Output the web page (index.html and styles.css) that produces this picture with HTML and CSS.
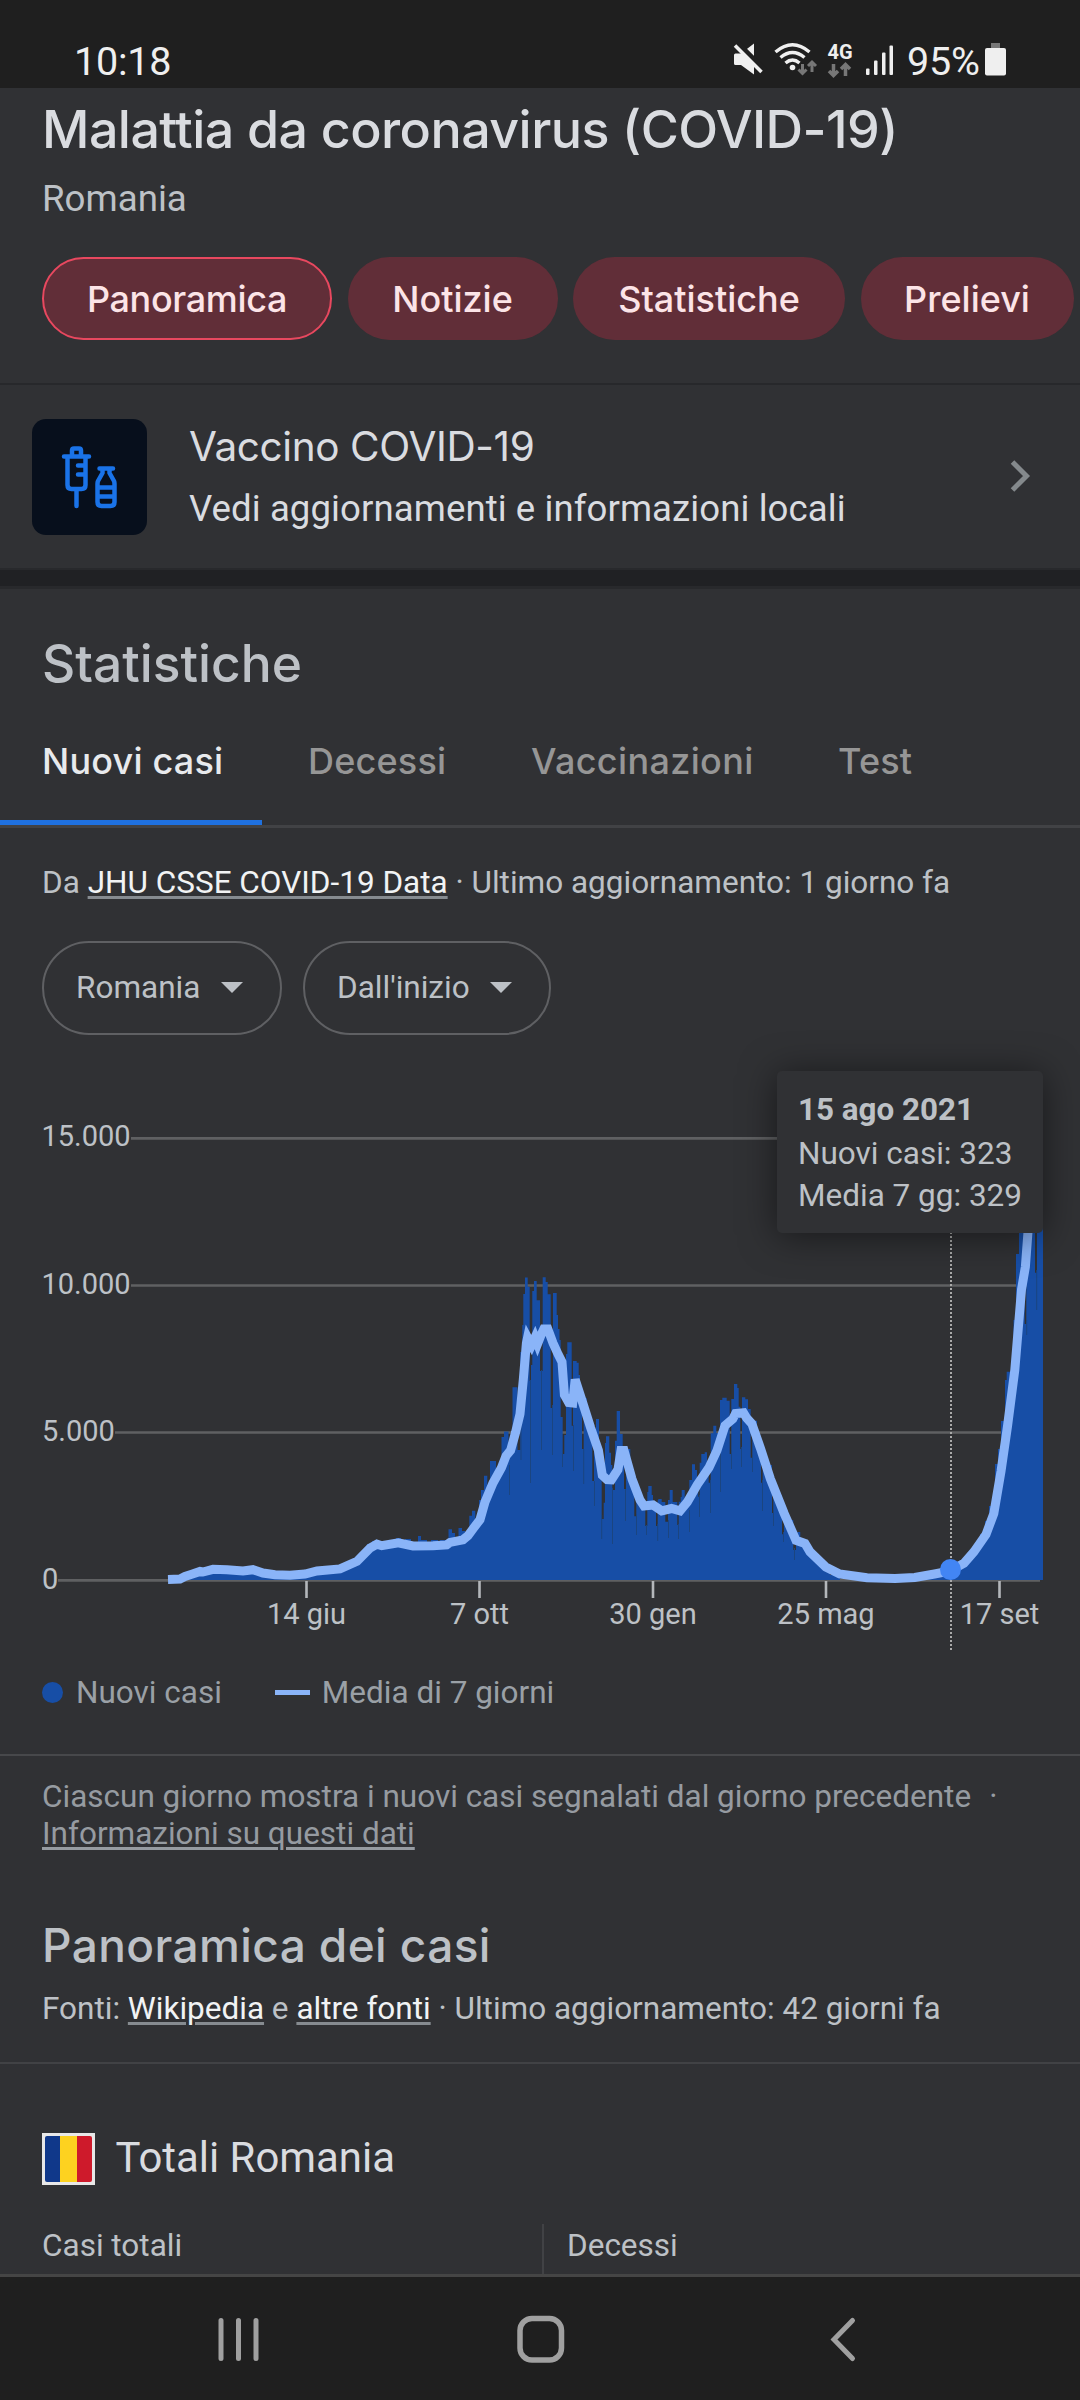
FILE: index.html
```html
<!DOCTYPE html>
<html lang="it">
<head>
<meta charset="utf-8">
<title>Malattia da coronavirus (COVID-19)</title>
<link rel="stylesheet" href="styles.css">
</head>
<body>
<div class="status-bar">
  <span class="clock">10:18</span>
  <svg class="status-icons" viewBox="725 30 175 58" width="175" height="58">
    <g fill="#efefef">
      <path d="M734 55q0-1.500 1.500-1.500h5.500l13-10v31l-13-9.500h-5.500q-1.500 0-1.500-1.500z"/>
      <path d="M737 43L765 71" stroke="#1f1f1f" stroke-width="6"/>
      <path d="M735 45.500L761.500 72" stroke="#efefef" stroke-width="3.600"/>
      <circle cx="792.500" cy="67.500" r="2.800"/>
      <rect x="866" y="68.500" width="3.500" height="6.500" rx="1"/>
      <rect x="874" y="60.500" width="3.500" height="14.500" rx="1"/>
      <rect x="882" y="52.500" width="3.500" height="22.500" rx="1"/>
      <rect x="889.500" y="45.500" width="3.500" height="29.500" rx="1"/>
    </g>
    <g fill="none" stroke="#efefef" stroke-width="3.400">
      <path d="M775.500 52Q792.500 37.500 809.500 52"/>
      <path d="M780.500 57.500Q792.500 47.500 804.500 57.500"/>
      <path d="M785.500 63Q792.500 57 799.500 63"/>
    </g>
    <g fill="none" stroke="#777" stroke-width="3">
      <path d="M802.500 64v9M798.500 69.500l4 4 4-4M812 72v-9M808 66l4-4 4 4"/>
      <path stroke-width="3.500" d="M833.500 64v11M829 71l4.500 4.500 4.500-4.500M845.500 76v-11M841 69l4.500-4.500 4.500 4.500"/>
    </g>
    <text class="net-label" x="827.500" y="58.500">4G</text>
  </svg>
  <span class="battery-text">95%</span>
  <svg class="battery" viewBox="0 0 21 33" width="21" height="33"><rect x="6" width="9" height="5" fill="#777"/><rect y="5" width="21" height="27.500" rx="2" fill="#efefef"/></svg>
</div>

<main class="page">
  <header class="hero">
    <h1 class="title">Malattia da coronavirus (COVID-19)</h1>
    <p class="place">Romania</p>
    <nav class="chips">
      <span class="chip chip-panoramica selected">Panoramica</span>
      <span class="chip chip-notizie">Notizie</span>
      <span class="chip chip-statistiche">Statistiche</span>
      <span class="chip chip-prelievi">Prelievi</span>
    </nav>
  </header>

  <section class="vaccine">
    <svg class="vaccine-icon" viewBox="0 0 115 116" width="115" height="116">
      <rect width="115" height="116" rx="14" fill="#070f1c"/>
      <g fill="none" stroke="#1a73e8" stroke-width="4.500" stroke-linecap="round" stroke-linejoin="round">
        <path d="M32 37.500h25M40 37v-5.500q0-2 2-2h5q2 0 2 2V37M35.500 38v28q0 4 4 4h10q4 0 4-4V38M44.500 71v16M53 46.500h-7M53 55.500h-7"/>
        <path d="M67.500 49.500h13.500M70.500 50v4l-4.500 8q-.500 1-.500 3v18q0 4 4 4h9q4 0 4-4V65q0-2-.500-3l-4.500-8v-4M66 68.500h16M66 77.500h16"/>
      </g>
    </svg>
    <div class="vaccine-text">
      <div class="vaccine-title">Vaccino COVID-19</div>
      <div class="vaccine-sub">Vedi aggiornamenti e informazioni locali</div>
    </div>
    <svg class="chevron" viewBox="0 0 24 34" width="24" height="34"><path d="M3.500 3l14 14-14 14" fill="none" stroke="#84898c" stroke-width="5"/></svg>
  </section>
  <div class="band"></div>

  <section class="stats">
    <h2 class="heading stats-heading">Statistiche</h2>
    <nav class="tabs">
      <span class="tab tab-nuovi active">Nuovi casi</span>
      <span class="tab tab-decessi">Decessi</span>
      <span class="tab tab-vaccinazioni">Vaccinazioni</span>
      <span class="tab tab-test">Test</span>
    </nav>
    <p class="source stats-source">Da <a>JHU CSSE COVID-19 Data</a> · Ultimo aggiornamento: 1 giorno fa</p>
    <div class="filters">
      <span class="filter filter-place"><span>Romania</span><i class="caret"></i></span>
      <span class="filter filter-period"><span>Dall'inizio</span><i class="caret"></i></span>
    </div>
    <div class="chart">
      <svg viewBox="0 1035 1080 625" width="1080" height="625">
        <path class="grid" d="M131 1138.300H1040M131 1285.500H1040M115 1432.500H1040M58 1580.300H1040"/>
        <path class="bars" d="M185 1580V1577H192V1573H198V1570H205V1568H212V1566H218V1568H226V1567H232V1570H250V1568H256V1571H262V1574H305V1573H315V1570H322V1568H340V1567H345V1562H355V1559H361V1553H367V1544H372V1541H380V1544H385V1543H390V1540H396V1538H401V1541H405V1539H411V1544H418V1536H421V1540H427V1543H431V1540H438V1542H440V1540H446V1545H448.500V1529.300H452V1533H455V1541H458.500V1528H462V1531H465V1540H469.300V1515.800H472V1510.800H475.300V1525H479V1500H481V1490H484V1475.800H487.300V1485H490V1461H496V1468H501.500V1437H504V1431.500H508.500V1455H512.500V1387.300H517.500V1450H520.300V1352H522.300V1325H523.300V1294H525V1277.500H527.700V1286.700H529.700V1381H531V1365H532.300V1291H534V1281H536.700V1300.300H540V1371H542.700V1277.300H545.700V1282H547.700V1294.300H550.700V1408H553V1293H556.700V1315H558V1329H559.500V1340H560.700V1417H562.700V1454H564.300V1435H566V1354H567.300V1342.300H571.700V1425.700H573V1361H576.700V1362.700H578.700V1375H580V1392H582V1449H583.700V1398H586.700V1412H589V1425H592.300V1481H594V1450H596V1419H599V1460H601.700V1519H603.700V1502.700H605V1443H606V1436.300H609.300V1452.700H611V1465H612.300V1490H615V1440.700H616.700V1411H620V1434H622.700V1460H624V1489H626V1460H627.300V1449H630.300V1475H634.300V1516.300H636.300V1495H641V1507H645.300V1526H647.300V1492H648.300V1486H651.700V1495H653V1503H656V1526H657.700V1500H658.300V1499H661.700V1502H665.300V1521.700H668V1500H669.700V1490H672.700V1502H677.300V1525H678.700V1501.700H680.700V1497H681.700V1490H684.700V1500H689.300V1480H692V1464.300H695V1470H697V1480H698.300V1496.700H699.700V1462.700H701.300V1454H704.700V1452.300H707V1467H708.700V1482.700H710.700V1433.300H713.300V1425.700H716.300V1433H720V1400H722.300V1397.700H726.700V1400.700H729.700V1454H731.300V1399H734V1384H737.300V1388H738.700V1406.700H740.300V1449H742V1397.300H745.300V1399.300H748V1409H750.700V1457.700H752.300V1425H754V1420.700H757V1440H761V1482.700H762.700V1465H772V1513H773.300V1495H782V1534.300H784V1520H793.300V1550H796V1540H797.300V1532H800.300V1543H806V1552H812V1560H820V1567H830V1575H840V1580H900V1578H935V1575H950V1571H960V1563H970V1555H977V1545H980V1534H985V1521H989V1506H995V1464H998V1449H1001V1421H1005V1380H1006.700V1371.700H1012V1354H1013.500V1320H1016V1254H1019V1220H1024.700V1324H1026.300V1220H1035V1272.700H1037V1220H1043V1580Z"/>
        <path class="gaps" d="M509.500 1465v30M521 1400v60M530.500 1380v103M541.500 1370v80M552.500 1405v50M562.500 1450v17M573.500 1425v46M583.700 1449v35M594.500 1481v25M601.700 1515v24M612.500 1488v56M625.500 1489v32M636.500 1514v21M646.500 1525v10M657.700 1524v17M668.500 1520v18M678.500 1524v15M689.500 1510v22M699.500 1495v22M710.500 1480v33M720.500 1450v42M731.500 1450v19M741.500 1447v20M752.500 1455v17M762.500 1480v31M773.500 1510v16M783.500 1532v10M794.500 1548v12M1026.700 1320v15M1036.700 1270v40"/>
        <path class="average" d="M168 1579.400L180 1579 185 1576.500 191.700 1574.300 200 1571.400 203 1572 213 1569.300 227 1569.700 243 1571 253 1569.700 263 1573 275 1574.700 290 1575.200 305 1574 317 1571 340 1568.900 357 1561.300 370 1548.200 377 1544.200 381.700 1545.700 398.300 1542.800 413 1546 433 1545.700 446.700 1544.900 450 1542.400 463 1539.800 468 1535.600 473 1528.900 480 1519.600 485 1502 493 1483 501.500 1467.600 506 1456 510.600 1450.400 515.400 1433 520 1414 523.300 1379.600 526.400 1343.200 527.600 1337.500 531.600 1345 535 1337.500 537.500 1344 541 1335 543.800 1329 547.800 1329 553 1343 558 1354 562 1362 564.400 1394.900 568.700 1402.500 572.700 1403 575.200 1379.600 582.600 1402.500 590.500 1427.400 598.400 1450.400 602.300 1475.200 607 1479.500 611.400 1479.800 618 1469.500 621 1450.400 624 1450.400 632 1479 640 1500 644 1506 653 1505 661.700 1510.800 671.500 1508.500 680 1510.800 687.400 1502 697.200 1484.800 709 1467.600 717 1450.400 725 1425.500 732.800 1419 735.600 1413.500 743.500 1412.800 746.700 1418 751.800 1423.600 760.500 1448.400 770.400 1479 784.200 1513.500 796 1540.300 805 1543.500 810 1551.800 825.800 1567 839.600 1574 867 1577.800 895 1578.600 914.700 1577.400 934.500 1574 950 1571 964 1563.300 974 1551.800 986 1534.500 993.800 1513.500 1001 1471.400 1007.600 1425.500 1014.800 1370 1021.500 1289.600 1025.400 1266.700 1028.500 1225"/>
        <path class="ticks" d="M306.500 1581v17M479.500 1581v17M653 1581v17M826 1581v17M999.500 1581v17"/>
        <path class="cursor" d="M951 1232V1651"/>
        <circle class="point" cx="950.500" cy="1569.500" r="10.500"/>
        <g class="axis">
          <text x="41.500" y="1145.800">15.000</text>
          <text x="41.500" y="1293.600">10.000</text>
          <text x="42" y="1441">5.000</text>
          <text x="42" y="1588.600">0</text>
        </g>
        <g class="axis axis-x">
          <text x="306.500" y="1623.500">14 giu</text>
          <text x="479.500" y="1623.500">7 ott</text>
          <text x="653" y="1623.500">30 gen</text>
          <text x="826" y="1623.500">25 mag</text>
          <text x="999.500" y="1623.500">17 set</text>
        </g>
      </svg>
      <div class="tooltip">
        <b>15 ago 2021</b>
        <p>Nuovi casi: 323</p>
        <p>Media 7 gg: 329</p>
      </div>
    </div>
    <div class="legend">
      <i class="legend-dot"></i><span>Nuovi casi</span>
      <i class="legend-line"></i><span>Media di 7 giorni</span>
    </div>
    <p class="note">Ciascun giorno mostra i nuovi casi segnalati dal giorno precedente<span class="note-dot">·</span><br><a>Informazioni su questi dati</a></p>
  </section>

  <section class="overview">
    <h2 class="heading">Panoramica dei casi</h2>
    <p class="source overview-source">Fonti: <a>Wikipedia</a> e <a>altre fonti</a> · Ultimo aggiornamento: 42 giorni fa</p>
  </section>

  <section class="totals">
    <div class="country">
      <svg class="flag" viewBox="0 0 53 52" width="53" height="52"><rect width="53" height="52" fill="#e8e8e8"/><path fill="#10388a" d="M5 3h13v46H5a2 2 0 0 1-2-2V5a2 2 0 0 1 2-2z"/><path fill="#fdd220" d="M18 3h17v46H18z"/><path fill="#ce1a2b" d="M35 3h13a2 2 0 0 1 2 2v42a2 2 0 0 1-2 2H35z"/></svg>
      <span>Totali Romania</span>
    </div>
    <div class="figures">
      <div class="figure">Casi totali</div>
      <div class="figure">Decessi</div>
    </div>
  </section>
</main>

<footer class="nav-bar">
  <svg viewBox="0 2277 1080 123" width="1080" height="123" fill="none" stroke="#a0a0a0" stroke-width="5" stroke-linecap="round">
    <path d="M221 2320.500v38M238.500 2320.500v38M256 2320.500v38"/>
    <rect x="520" y="2318.500" width="41.500" height="41.500" rx="12" stroke-width="5.500"/>
    <path d="M852.500 2320.500l-18.500 19 18.500 19"/>
  </svg>
</footer>
</body>
</html>
```
FILE: styles.css
```css
* { box-sizing: border-box; }
body { margin: 0; width: 1080px; height: 2400px; overflow: hidden; display: flex; flex-direction: column; background: #303134; color: #bdc1c6; font-family: Roboto, sans-serif; }
h1, h2, p { margin: 0; font-weight: 400; }
svg { display: block; flex: none; }

.status-bar { flex: none; height: 88px; background: #1f1f1f; color: #efefef; display: flex; align-items: flex-start; padding: 30px 0 0 74px; font-size: 39.5px; line-height: 63px; letter-spacing: -0.2px; }
.clock { width: 651px; }
.status-icons { width: 175px; }
.net-label { font: 700 20px Roboto, sans-serif; fill: #efefef; letter-spacing: 0; }
.battery-text { width: 85px; padding-left: 7px; white-space: nowrap; }
.battery { margin-top: 13px; }

.page { flex: none; height: 2186px; overflow: hidden; }
.hero { height: 297px; padding: 10px 0 0 42px; border-bottom: 2px solid #27282b; }
.title, .chip, .vaccine-title, .heading, .tab { font-family: Inter, sans-serif; }
.title { font-size: 52px; line-height: 64px; font-weight: 500; letter-spacing: -0.57px; color: #dadce0; white-space: nowrap; }
.place { margin-top: 15px; font-size: 36.7px; line-height: 44px; }
.chips { display: flex; gap: 15.5px; margin-top: 36px; }
.chip { flex: none; height: 83px; display: flex; align-items: center; justify-content: center; border-radius: 42px; background: #612e38; color: #fce4e7; font-size: 36px; font-weight: 500; line-height: 44px; letter-spacing: 0; }
.chip.selected { border: 2px solid #e8485f; letter-spacing: -0.35px; }
.chip-panoramica { width: 290px; }
.chip-notizie { width: 210px; }
.chip-statistiche { width: 272px; }
.chip-prelievi { width: 213px; }

.vaccine { height: 183px; display: flex; align-items: flex-start; padding: 34px 47px 0 32px; color: #dadce0; }
.vaccine-text { flex: 1; margin-left: 42px; padding-top: 4px; }
.vaccine-title { font-size: 40.5px; line-height: 48px; margin-bottom: 16px; letter-spacing: -0.4px; }
.vaccine-sub { font-size: 36.6px; line-height: 44px; letter-spacing: 0.08px; white-space: nowrap; }
.chevron { margin-top: 40px; }
.band { height: 21px; background: #202124; border-top: 2px solid #28292c; border-bottom: 3px solid #28292c; }

.heading { font-size: 46px; line-height: 56px; font-weight: 500; letter-spacing: 0.4px; padding-left: 42px; color: #bdc1c6; }
.stats-heading { padding-top: 46px; font-size: 51.5px; letter-spacing: 0; }
.tabs { display: flex; height: 89px; margin-top: 48px; border-bottom: 3px solid #414245; color: #969696; font-size: 36px; line-height: 44px; font-weight: 500; letter-spacing: 0.2px; }
.tab { white-space: nowrap; }
.tab-nuovi { width: 262px; padding-left: 42px; }
.tab-decessi { width: 222px; padding-left: 46px; }
.tab-vaccinazioni { width: 307px; padding-left: 47px; letter-spacing: 0.35px; }
.tab-test { padding-left: 47px; }
.tab.active { color: #e8eaed; border-bottom: 5px solid #1f71e0; }
.source { padding-left: 42px; font-size: 31.5px; line-height: 40px; white-space: nowrap; }
.source a { color: #f1f3f4; text-decoration: underline; text-decoration-color: #868b90; text-decoration-thickness: 3px; text-underline-offset: 3px; }
.stats-source { padding-top: 35px; }
.filters { display: flex; gap: 21px; padding: 38px 0 0 42px; }
.filter { height: 94px; display: flex; align-items: center; justify-content: space-between; padding: 0 37px 2px 32px; border: 2px solid #5f6063; border-radius: 47px; font-size: 31.5px; }
.filter-place { width: 240px; }
.filter-period { width: 248px; }
.caret { border: 11px solid transparent; border-top-color: #bdc1c6; border-bottom: 0; }

.chart { position: relative; height: 625px; }
.grid { stroke: #5f6062; stroke-width: 2.7; }
.bars { fill: #174ea6; }
.gaps { stroke: #1b4580; stroke-width: 1; }
.average { fill: none; stroke: #8ab4f8; stroke-width: 9; }
.ticks { stroke: #b4b7bb; stroke-width: 2.6; }
.cursor { stroke: #aaa; stroke-width: 2; stroke-dasharray: 2 2; }
.point { fill: #4285f4; }
.axis { font-size: 29px; fill: #bdc1c6; }
.axis-x { text-anchor: middle; }
.tooltip { position: absolute; left: 777px; top: 36px; width: 266px; height: 162px; padding: 16px 0 0 21px; border-radius: 5px; background: #303134; box-shadow: 0 3px 36px rgba(0,0,0,.5); font-size: 31.5px; line-height: 42px; white-space: nowrap; }
.tooltip b { display: block; line-height: 45px; margin-bottom: 1px; font-size: 31.4px; }

.legend { display: flex; align-items: center; height: 94px; padding: 12px 0 42px 42px; color: #9aa0a6; font-size: 31.5px; line-height: 40px; }
.legend span { padding-top: 1px; }
.legend-dot { width: 21px; height: 21px; margin-right: 13px; border-radius: 50%; background: #174ea6; }
.legend-line { width: 35px; height: 5px; margin: 0 12px 0 53px; background: #8ab4f8; }
.note { height: 163px; border-top: 2px solid #47484b; padding: 22px 0 0 42px; color: #969ba1; font-size: 31.5px; line-height: 37px; white-space: nowrap; }
.note a { text-decoration: underline; text-decoration-thickness: 3px; text-underline-offset: 3px; }
.note-dot { margin-left: 18px; }

.overview { height: 147px; border-bottom: 2px solid #414245; }
.overview-source { padding-top: 16px; }
.totals { padding-top: 69px; }
.country { display: flex; gap: 20.5px; padding-left: 42px; height: 91px; font-size: 41.9px; line-height: 50px; color: #dadce0; }
.figures { display: flex; font-size: 31.5px; line-height: 43px; height: 50px; }
.figure { flex: none; width: 542px; padding-left: 42px; }
.figure + .figure { width: 538px; border-left: 2px solid #414245; padding-left: 23px; }

.nav-bar { flex: none; height: 126px; background: #1f1f1f; border-top: 3px solid #454545; }
```
